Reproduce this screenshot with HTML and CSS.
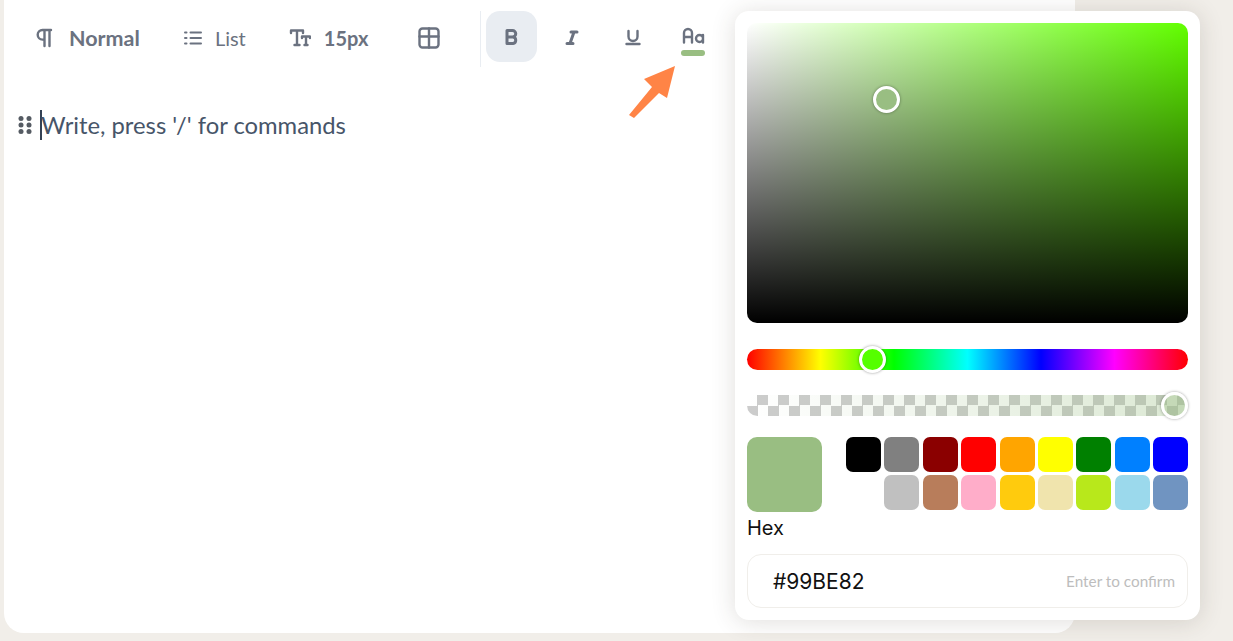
FILE: index.html
```html
<!DOCTYPE html>
<html lang="en">
<head>
<meta charset="utf-8">
<title>Editor</title>
<link rel="stylesheet" href="styles.css">
</head>
<body>
<main class="card">
  <div class="toolbar">
    <div class="tool tool-block">
      <svg class="ico" width="20" height="20" viewBox="0 0 20 20"><path d="M16 2H7.500a4.800 4.800 0 0 0 0 9.600H9M9.500 2v16M14.500 2v16"/></svg>
      <span class="tool-label strong">Normal</span>
    </div>
    <div class="tool tool-list">
      <svg class="ico ico-thin" width="18" height="18" viewBox="0 0 18 18"><path d="M6.500 3.500H17M6.500 9H17M6.500 14.500H17M1 3.500h1.500M1 9h1.500M1 14.500h1.500"/></svg>
      <span class="tool-label">List</span>
    </div>
    <div class="tool tool-size">
      <svg class="ico" width="22" height="20" viewBox="0 0 22 20"><path d="M2 5V2.500h12V5M8 2.500V17M5.500 17h5M13 10V8.500h8V10M17 8.500V17M15.500 17h3"/></svg>
      <span class="tool-label strong">15px</span>
    </div>
    <div class="tool tool-table">
      <svg class="ico" width="22" height="22" viewBox="0 0 22 22"><rect x="1.500" y="1.500" width="19" height="19" rx="3"/><path d="M1.500 9.500h19M11 1.500v19"/></svg>
    </div>
    <div class="divider"></div>
    <div class="marks">
      <div class="mark mark-active">
        <svg class="ico ico-bold" width="18" height="18" viewBox="0 0 18 18"><path d="M4 2.500h5.500a3.200 3.200 0 0 1 0 6.500H4zM4 9h6a3.300 3.300 0 0 1 0 6.500H4z"/></svg>
      </div>
      <div class="mark">
        <svg class="ico ico-bold" width="18" height="18" viewBox="0 0 18 18"><path d="M8 4h6M4 15.500h6M11 4 7 15.500"/></svg>
      </div>
      <div class="mark">
        <svg class="ico" width="18" height="18" viewBox="0 0 18 18"><path d="M2.500 16h13M4.500 3v5.500a4.500 4.500 0 0 0 9 0V3"/></svg>
      </div>
      <div class="mark mark-color">
        <svg class="ico" width="24" height="17" viewBox="0 0 24 17"><path d="M3 15.500V6a4 4 0 0 1 8 0v9.500M3 10h8M22 8v7.500M22 11.500a3.500 3.500 0 1 1-7 0a3.500 3.500 0 0 1 7 0"/></svg>
        <span class="color-bar"></span>
      </div>
    </div>
  </div>
  <div class="line">
    <svg class="handle" width="14" height="20" viewBox="0 0 14 20"><circle cx="3" cy="3.500" r="2.500"/><circle cx="11" cy="3.500" r="2.500"/><circle cx="3" cy="10" r="2.500"/><circle cx="11" cy="10" r="2.500"/><circle cx="3" cy="16.500" r="2.500"/><circle cx="11" cy="16.500" r="2.500"/></svg>
    <span class="caret"></span>
    <span class="placeholder">Write, press '/' for commands</span>
  </div>
</main>

<svg class="arrow" width="60" height="60" viewBox="0 0 60 60"><path d="M50 0 42 32 34 27 9 52 4 49 27 21 19 13z"/></svg>

<aside class="picker">
  <div class="sv"><span class="knob sv-knob"></span></div>
  <div class="slider hue"><span class="knob hue-knob"></span></div>
  <div class="slider alpha"><span class="knob alpha-knob"></span></div>
  <div class="swatches">
    <div class="current"></div>
    <div class="palette">
      <span class="sw s-black"></span><span class="sw s-gray"></span><span class="sw s-maroon"></span><span class="sw s-red"></span><span class="sw s-orange"></span><span class="sw s-yellow"></span><span class="sw s-green"></span><span class="sw s-blue"></span><span class="sw s-navy"></span>
      <span class="sw s-white"></span><span class="sw s-silver"></span><span class="sw s-brown"></span><span class="sw s-pink"></span><span class="sw s-amber"></span><span class="sw s-khaki"></span><span class="sw s-lime"></span><span class="sw s-sky"></span><span class="sw s-steel"></span>
    </div>
  </div>
  <div class="hex-label">Hex</div>
  <div class="hex-input">
    <span class="hex-value">#99BE82</span>
    <span class="hex-hint">Enter to confirm</span>
  </div>
</aside>
</body>
</html>
```

FILE: styles.css
```css
* { box-sizing: border-box; }
html, body { margin: 0; height: 100%; }
body {
  position: relative;
  height: 641px;
  overflow: hidden;
  background: #f1eee9;
  padding: 0 158px 8px 4px;
  font-family: "Lato", "Liberation Sans", sans-serif;
}
.card {
  height: 633px;
  background: #fff;
  border-radius: 0 0 20px 20px;
}
.toolbar {
  display: flex;
  align-items: flex-start;
  padding: 11px 0 0 31px;
  height: 99px;
}
.tool {
  display: flex;
  align-items: center;
  height: 54px;
  color: #6b7280;
}
.tool-block { gap: 14px; }
.tool-list { margin-left: 44px; gap: 13px; }
.tool-size { margin-left: 43px; gap: 13px; }
.tool-table { margin-left: 50px; }
.tool-label { font-size: 20px; color: #6b7280; }
.tool-block .tool-label { font-size: 21.500px; }
.strong { font-weight: 700; }
.ico {
  display: block;
  fill: none;
  stroke: #6b7280;
  stroke-width: 2.400;
  stroke-linecap: round;
  stroke-linejoin: round;
}
.ico-thin { stroke-width: 2; }
.ico-bold { stroke-width: 3; }
.divider { width: 1px; height: 56px; margin-left: 40px; background: #e9edf2; }
.marks { display: flex; gap: 9.500px; margin-left: 5px; }
.mark {
  position: relative;
  width: 51px;
  height: 51px;
  border-radius: 14px;
  display: flex;
  align-items: center;
  justify-content: center;
}
.mark-active { background: #e9edf2; }
.mark-color { flex-direction: column; justify-content: flex-start; padding-top: 16px; gap: 6px; }
.color-bar { width: 24px; height: 6px; border-radius: 3px; background: #99be82; }
.line {
  display: flex;
  align-items: center;
  height: 30px;
  margin-top: 11px;
  padding-left: 14px;
}
.handle { fill: #555b63; }
.caret { width: 2px; height: 30px; margin-left: 8px; background: #334155; }
.placeholder { margin-left: -1px; font-size: 23.800px; color: #475569; }
.arrow {
  position: absolute;
  left: 625px;
  top: 66px;
  fill: #ff8446;
}
.picker {
  position: absolute;
  left: 735px;
  top: 11px;
  width: 465px;
  height: 609px;
  padding: 12px 12px;
  background: #fff;
  border-radius: 14px;
  box-shadow: 0 2px 24px rgba(60, 50, 40, .16);
}
.sv {
  position: relative;
  height: 300px;
  border-radius: 10px;
  background:
    linear-gradient(to top, #000, rgba(0, 0, 0, 0)),
    linear-gradient(to right, #fff, rgba(255, 255, 255, 0)),
    #62ff00;
}
.slider {
  position: relative;
  height: 21px;
  margin-top: 26px;
  border-radius: 11px;
}
.hue {
  background: linear-gradient(to right, #f00 0%, #ff0 16.670%, #0f0 33.330%, #0ff 50%, #00f 66.670%, #f0f 83.330%, #f00 100%);
}
.alpha {
  margin-top: 25px;
  background:
    linear-gradient(to right, rgba(153, 190, 130, 0), rgba(153, 190, 130, .35)),
    repeating-conic-gradient(#ccc 0 25%, #fff 0 50%) 0 0 / 21px 21px;
}
.knob {
  position: absolute;
  width: 27px;
  height: 27px;
  border-radius: 50%;
  border: 3px solid #fff;
  box-shadow: 0 0 3px rgba(0, 0, 0, .4);
}
.sv-knob { left: 126px; top: 63px; background: #99be82; }
.hue-knob { left: 112px; top: -3px; background: #55ff00; }
.alpha-knob { left: 414px; top: -3px; background: rgba(153, 190, 130, .35); }
.swatches { display: flex; justify-content: space-between; margin-top: 21px; }
.current { width: 75px; height: 75px; border-radius: 10px; background: #99be82; }
.palette { display: grid; grid-template-columns: repeat(9, 35px); grid-auto-rows: 35px; column-gap: 3.375px; row-gap: 3px; }
.sw { border-radius: 7px; }
.s-black { background: #000; }
.s-gray { background: #808080; }
.s-maroon { background: #8b0000; }
.s-red { background: #f00; }
.s-orange { background: #ffa500; }
.s-yellow { background: #ff0; }
.s-green { background: #008000; }
.s-blue { background: #0080ff; }
.s-navy { background: #00f; }
.s-white { background: #fff; }
.s-silver { background: #c0c0c0; }
.s-brown { background: #b87d5b; }
.s-pink { background: #ffadc9; }
.s-amber { background: #ffcb0d; }
.s-khaki { background: #f0e4ad; }
.s-lime { background: #b8e81b; }
.s-sky { background: #9bd9ec; }
.s-steel { background: #7094c1; }
.hex-label { margin-top: 4px; font-family: "Inter", sans-serif; font-size: 20px; line-height: 24px; color: #111; }
.hex-input {
  display: flex;
  align-items: center;
  justify-content: space-between;
  height: 54px;
  margin-top: 14px;
  padding: 0 12px 0 25px;
  border: 1px solid #f0eeea;
  border-radius: 14px;
}
.hex-value { font-family: "Inter", sans-serif; font-size: 21px; color: #111; }
.hex-hint { font-size: 15.300px; color: #bdbdbd; }
```
